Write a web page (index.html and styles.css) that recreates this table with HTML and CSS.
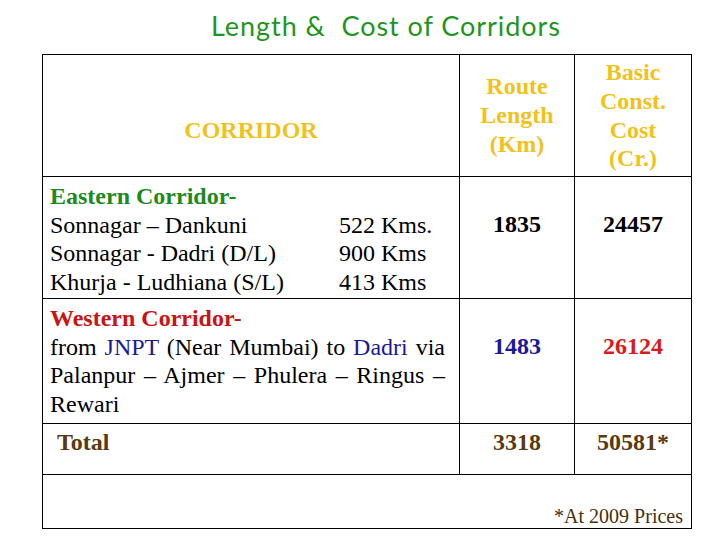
FILE: index.html
```html
<!DOCTYPE html>
<html>
<head>
<meta charset="utf-8">
<link rel="stylesheet" href="styles.css">
</head>
<body>
<h1 class="title">Length &amp;&nbsp; Cost of Corridors</h1>
<table class="tbl">
  <colgroup>
    <col class="c1"><col class="c2"><col class="c3">
  </colgroup>
  <tr class="r-head">
    <td class="head head-main">CORRIDOR</td>
    <td class="head">Route<br>Length<br>(Km)</td>
    <td class="head">Basic<br>Const.<br>Cost<br>(Cr.)</td>
  </tr>
  <tr class="r-east">
    <td class="desc">
      <div class="sub green">Eastern Corridor-</div>
      <div class="pairs">
        <span>Sonnagar – Dankuni</span><span>522 Kms.</span>
        <span>Sonnagar - Dadri (D/L)</span><span>900 Kms</span>
        <span>Khurja - Ludhiana (S/L)</span><span>413 Kms</span>
      </div>
    </td>
    <td class="num">1835</td>
    <td class="num">24457</td>
  </tr>
  <tr class="r-west">
    <td class="desc">
      <div class="sub red">Western Corridor-</div>
      <p class="just">from <span class="blue">JNPT</span> (Near Mumbai) to <span class="blue">Dadri</span> via Palanpur – Ajmer – Phulera – Ringus – Rewari</p>
    </td>
    <td class="num blue">1483</td>
    <td class="num red2">26124</td>
  </tr>
  <tr class="r-total">
    <td class="tot tot-label">Total</td>
    <td class="tot num-t">3318</td>
    <td class="tot num-t">50581*</td>
  </tr>
  <tr class="r-foot">
    <td class="foot" colspan="3">*At 2009 Prices</td>
  </tr>
</table>
</body>
</html>
```
FILE: styles.css
```css
html, body {
  margin: 0;
  padding: 0;
  background: #fff;
}
body {
  width: 720px;
  height: 540px;
  overflow: hidden;
  font-family: "Liberation Serif", "Times New Roman", serif;
  color: #000;
}
.title {
  margin: 0;
  height: 54px;
  box-sizing: border-box;
  padding: 8px 0 0 211px;
  font-family: Lato, "Open Sans", sans-serif;
  font-weight: normal;
  font-size: 27px;
  letter-spacing: 0.95px;
  line-height: 36px;
  color: #1f951f;
  white-space: nowrap;
}
.tbl {
  margin-left: 42px;
  border-collapse: collapse;
  table-layout: fixed;
  width: 649px;
  font-size: 24px;
  line-height: 28.7px;
}
.c1 { width: 417px; }
.c2 { width: 115px; }
.c3 { width: 117px; }
.tbl td {
  border: 1px solid #000;
  padding: 0;
}
.r-head { height: 122px; }
.r-east { height: 122px; }
.r-west { height: 125px; }
.r-total { height: 51px; }
.r-foot { height: 54px; }

.head {
  text-align: center;
  vertical-align: middle;
  font-weight: bold;
  color: #f1c21b;
}
.head-main { padding-top: 30px !important; }

.desc {
  vertical-align: top;
  padding: 5px 14px 0 7px !important;
}
.sub { font-weight: bold; }
.green { color: #1e8a1e; }
.red { color: #c81414; }
.blue { color: #1a1a94; }
.red2 { color: #d81c1c; }
.pairs {
  display: grid;
  grid-template-columns: 289px auto;
}
.just {
  margin: 0;
  text-align: justify;
}
.num {
  vertical-align: top;
  text-align: center;
  font-weight: bold;
  padding-top: 33px !important;
}
.tot {
  vertical-align: top;
  font-weight: bold;
  color: #5a3a0e;
  padding-top: 4px !important;
}
.tot-label { padding-left: 14px !important; }
.num-t { text-align: center; }
.foot {
  text-align: right;
  vertical-align: bottom;
  font-size: 20px;
  line-height: 24px;
  color: #4a2f0c;
  padding: 0 8px 0 0 !important;
}
```
